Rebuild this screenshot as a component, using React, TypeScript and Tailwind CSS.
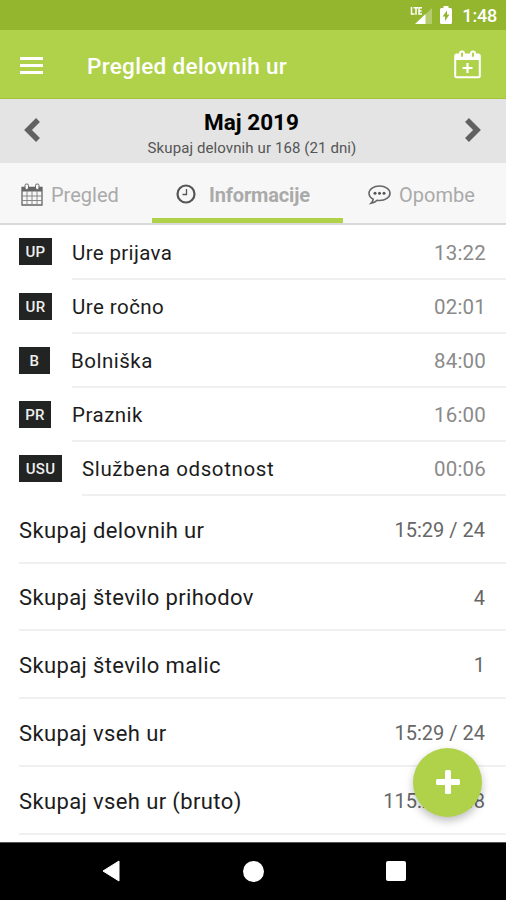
import React from "react";

const entries = [
  { code: "UP", label: "Ure prijava", value: "13:22", height: "h-[55px]", badge: "w-[33px]", gap: "ml-5", text: "tracking-[0.35px]" },
  { code: "UR", label: "Ure ročno", value: "02:01", height: "h-[54px]", badge: "w-[33px]", gap: "ml-5", text: "tracking-[0.45px]" },
  { code: "B", label: "Bolniška", value: "84:00", height: "h-[54px]", badge: "w-[31px]", gap: "ml-[22px]", text: "-ml-px tracking-[0.5px]" },
  { code: "PR", label: "Praznik", value: "16:00", height: "h-[54px]", badge: "w-[32px]", gap: "ml-[21px]", text: "tracking-[0.5px]" },
  { code: "USU", label: "Službena odsotnost", value: "00:06", height: "h-[54px]", badge: "w-[43px]", gap: "ml-5", text: "tracking-[0.62px]" },
];

const totals = [
  { label: "Skupaj delovnih ur", value: "15:29 / 24", height: "h-[68px]" },
  { label: "Skupaj število prihodov", value: "4", height: "h-[67px]" },
  { label: "Skupaj število malic", value: "1", height: "h-[68px]" },
  { label: "Skupaj vseh ur", value: "15:29 / 24", height: "h-[68px]" },
  { label: "Skupaj vseh ur (bruto)", value: "115:29 / 48", height: "h-[68px]" },
];

const StatusBar = () => (
  <div className="h-[30px] bg-[#94b62e] flex items-center justify-end pr-[9px] text-white">
    <svg width="23" height="20" viewBox="0 0 23 20" className="mr-[7px] -mt-px">
      <path d="M22 3v16H6z" fill="#fff" opacity="0.3" />
      <path d="M15.500 9v10H5z" fill="#fff" />
      <path d="M1.500 2v7h3M3.500 2.800h4.500M6 2.800v7M12 2.800H9v6.300h3M9 6h2.600" fill="none" stroke="#fff" strokeWidth="1.500" />
    </svg>
    <svg width="12" height="18" viewBox="0 0 12 18" className="mr-[10px] -mt-px">
      <path d="M3.500 0h5v2h2a1.500 1.500 0 0 1 1.500 1.500v13a1.500 1.500 0 0 1-1.500 1.500h-9A1.500 1.500 0 0 1 0 16.500v-13A1.500 1.500 0 0 1 1.500 2h2z" fill="#fff" />
      <path d="M7 4.500v4h2.500L5 15v-4.500H2.500z" fill="#94b62e" />
    </svg>
    <span className="text-[18px] leading-5 font-medium tracking-[-0.2px] mt-[2px]">1:48</span>
  </div>
);

const Toolbar = () => (
  <div className="h-[69px] bg-[#b0d24a] border-b border-[#a3c53c] flex items-center pl-5 pr-[25px]">
    <div className="w-[23px] flex flex-col gap-1 mt-[2px]">
      <div className="h-[3px] bg-white"></div>
      <div className="h-[3px] bg-white"></div>
      <div className="h-[3px] bg-white"></div>
    </div>
    <h1 className="ml-11 mt-1 text-[22.5px] leading-7 font-medium tracking-[0.32px] text-white whitespace-nowrap">Pregled delovnih ur</h1>
    <svg width="27" height="29" viewBox="0 0 27 29" className="ml-auto mt-px">
      <rect x="1.200" y="4.500" width="24.600" height="22.800" rx="1.500" fill="none" stroke="#fff" strokeWidth="2" />
      <path d="M1 4.500h25V10H1z" fill="#fff" />
      <path d="M8 7V3.500M19 7V3.500" stroke="#fff" strokeWidth="6" strokeLinecap="round" />
      <path d="M8 6V3.500M19 6V3.500" stroke="#b0d24a" strokeWidth="2" strokeLinecap="round" />
      <path d="M13.500 13v10M8.500 18h10" stroke="#fff" strokeWidth="2.200" />
    </svg>
  </div>
);

const MonthPicker = () => (
  <div className="h-16 bg-[#e4e4e4] flex items-center justify-between px-6">
    <svg width="17" height="24" viewBox="0 0 17 24" className="-mt-[2px]">
      <path d="M14 2L4 12l10 10" fill="none" stroke="#616161" strokeWidth="5.500" />
    </svg>
    <div className="text-center pt-[5px]">
      <h2 className="-ml-[3px] text-[22.5px] leading-6 font-bold text-black">Maj 2019</h2>
      <p className="mt-1 -ml-[2px] text-[15px] leading-5 tracking-[0.1px] text-[#555]">Skupaj delovnih ur 168 (21 dni)</p>
    </div>
    <svg width="17" height="24" viewBox="0 0 17 24" className="-mt-[2px]">
      <path d="M2 2l10 10L2 22" fill="none" stroke="#616161" strokeWidth="5.500" />
    </svg>
  </div>
);

const Tabs = () => (
  <div className="h-[62px] bg-[#f7f7f7] border-b-2 border-[#d9d9d9] grid grid-cols-[152px_191px_163px] text-[20px] text-[#aaa]">
    <div className="flex items-center pl-[21px] pt-[2px]">
      <svg width="22" height="23" viewBox="0 0 22 23">
        <path d="M1 4.500h20v17.500H1z" fill="none" stroke="#666" strokeWidth="1.300" />
        <path d="M1 4h20v4.500H1z" fill="#666" />
        <path d="M1 13h20M1 17.500h20M6 8v14M11 8v14M16 8v14" stroke="#888" strokeWidth="1" />
        <rect x="4" y="1" width="3.500" height="5.500" rx="1.500" fill="#f7f7f7" stroke="#666" />
        <rect x="14.500" y="1" width="3.500" height="5.500" rx="1.500" fill="#f7f7f7" stroke="#666" />
      </svg>
      <span className="ml-2 mt-px">Pregled</span>
    </div>
    <div className="flex items-center pl-6 font-bold border-b-[5px] border-[#b0d24a] pt-[7px]">
      <svg width="20" height="20" viewBox="0 0 20 20">
        <circle cx="10" cy="10" r="8.500" fill="none" stroke="#555" strokeWidth="2.200" />
        <path d="M10.500 5v5.500H6.500" fill="none" stroke="#555" strokeWidth="1.300" />
      </svg>
      <span className="ml-[13px] mt-px tracking-[-0.15px]">Informacije</span>
    </div>
    <div className="flex items-center pl-[25px] pt-[2px]">
      <svg width="23" height="20" viewBox="0 0 23 20" className="mt-[2px]">
        <path d="M11.500 1C5.700 1 1 4.200 1 8.300c0 2.500 1.700 4.600 4.200 5.900-.2 1.700-1 3-2.200 4.100 2.600-.3 4.600-1.300 6.100-3 .8.200 1.600.2 2.400.2 5.800 0 10.500-3.100 10.500-7.200S17.300 1 11.500 1z" fill="none" stroke="#666" strokeWidth="1.600" />
        <circle cx="7" cy="8.300" r="1.500" fill="#555" />
        <circle cx="11.500" cy="8.300" r="1.500" fill="#555" />
        <circle cx="16" cy="8.300" r="1.500" fill="#555" />
      </svg>
      <span className="ml-2 mt-px">Opombe</span>
    </div>
  </div>
);

const App: React.FC = () => {
  return (
    <div className="relative w-[506px] h-[900px] overflow-hidden bg-white flex flex-col font-['Roboto',sans-serif]">
      <StatusBar />
      <Toolbar />
      <MonthPicker />
      <Tabs />

      <div className="h-[617px] overflow-hidden">
        {entries.map((entry) => (
          <div key={entry.code} className={`flex pl-[19px] ${entry.height}`}>
            <span className={`h-[27px] mt-[13px] pt-[2px] bg-[#222423] text-[#eee] text-[15px] font-medium tracking-[0.3px] flex items-center justify-center ${entry.badge}`}>
              {entry.code}
            </span>
            <div className={`flex-1 flex items-center justify-between pt-[3px] pr-5 border-b-2 border-[#f0f0f0] text-[20.5px] ${entry.gap}`}>
              <span className={`text-[#1c1c1c] ${entry.text}`}>{entry.label}</span>
              <span className="text-[#8a8a8a] tracking-[0.2px]">{entry.value}</span>
            </div>
          </div>
        ))}
        {totals.map((total) => (
          <div
            key={total.label}
            className={`ml-[19px] pt-[2px] pr-[21px] flex items-center justify-between border-b-2 border-[#f0f0f0] ${total.height}`}
          >
            <span className="text-[22px] tracking-[0.38px] text-[#1c1c1c]">{total.label}</span>
            <span className="text-[20px] text-[#666]">{total.value}</span>
          </div>
        ))}
      </div>

      <button className="absolute left-[413px] top-[748px] w-[69px] h-[69px] rounded-full bg-[#b0d24a] shadow-[0_4px_8px_rgba(0,0,0,0.25)] flex items-center justify-center">
        <svg width="24" height="24" viewBox="0 0 24 24" className="-mt-[2px]">
          <rect x="9" y="0" width="6" height="24" rx="1.500" fill="#fff" />
          <rect x="0" y="9" width="24" height="6" rx="1.500" fill="#fff" />
        </svg>
      </button>

      <div className="h-[58px] bg-black border-t border-[#555] flex items-center pl-[102px] pb-px">
        <svg width="18" height="22" viewBox="0 0 18 22">
          <path d="M17 1v20L1 11z" fill="#fff" stroke="#fff" strokeLinejoin="round" />
        </svg>
        <div className="ml-[123px] w-[21px] h-[21px] rounded-full bg-white"></div>
        <div className="ml-[122px] w-5 h-5 rounded-[2px] bg-white"></div>
      </div>
    </div>
  );
};

export default App;
